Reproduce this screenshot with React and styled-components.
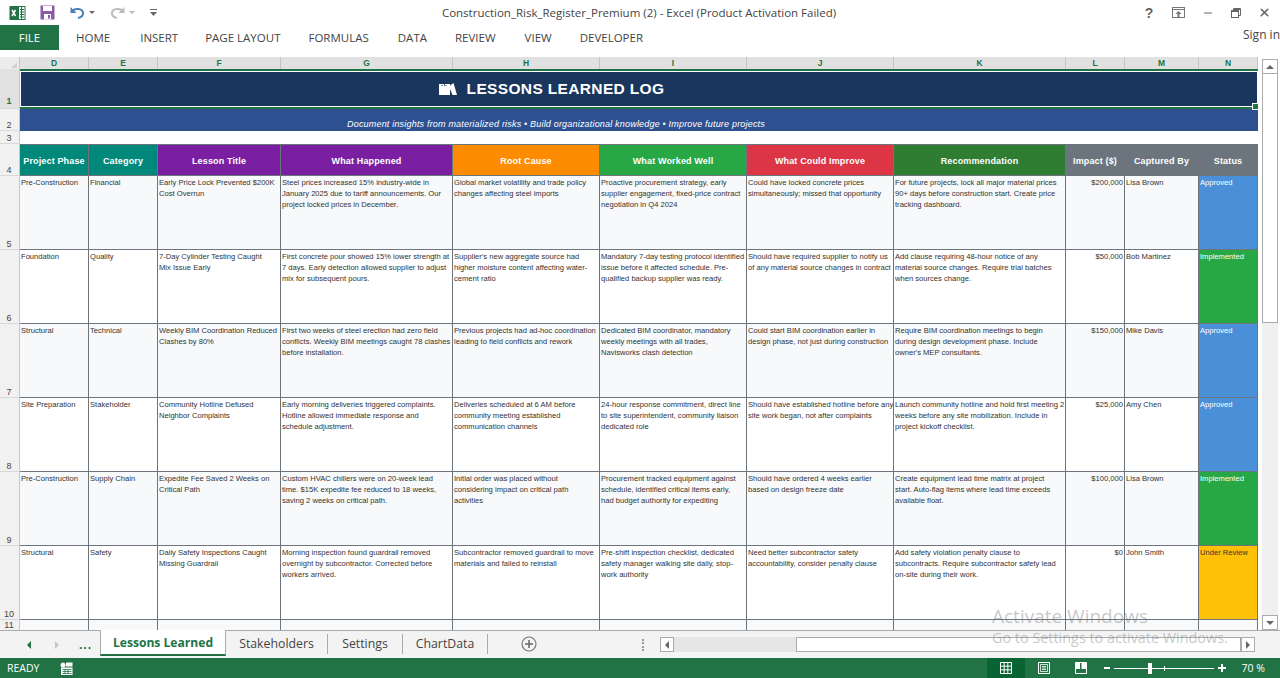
import React from 'react';
import styled, { createGlobalStyle } from 'styled-components';
import { X, Minus } from 'lucide-react';

const COLUMNS = [
  { id: 'D', width: 69 },
  { id: 'E', width: 69 },
  { id: 'F', width: 123 },
  { id: 'G', width: 172 },
  { id: 'H', width: 147 },
  { id: 'I', width: 147 },
  { id: 'J', width: 147 },
  { id: 'K', width: 172 },
  { id: 'L', width: 59 },
  { id: 'M', width: 74 },
  { id: 'N', width: 59 },
];

const GRID = COLUMNS.map(c => `${c.width}px`).join(' ');

const HEADERS = [
  ['Project Phase', '#00897b'],
  ['Category', '#00897b'],
  ['Lesson Title', '#7b1fa2'],
  ['What Happened', '#7b1fa2'],
  ['Root Cause', '#ff8c00'],
  ['What Worked Well', '#28a745'],
  ['What Could Improve', '#dc3545'],
  ['Recommendation', '#2e7d32'],
  ['Impact ($)', '#6c757d'],
  ['Captured By', '#6c757d'],
  ['Status', '#6c757d'],
];

const STATUS = {
  Approved: { bg: '#4a90d9', fg: '#ffffff' },
  Implemented: { bg: '#28a745', fg: '#ffffff' },
  'Under Review': { bg: '#ffc107', fg: '#333333' },
};

// line breaks follow the wrapping excel did on the sheet
const LESSONS = [
  {
    row: 5,
    cells: [
      'Pre-Construction',
      'Financial',
      'Early Price Lock Prevented $200K\nCost Overrun',
      'Steel prices increased 15% industry-wide in\nJanuary 2025 due to tariff announcements. Our\nproject locked prices in December.',
      'Global market volatility and trade policy\nchanges affecting steel imports',
      'Proactive procurement strategy, early\nsupplier engagement, fixed-price contract\nnegotiation in Q4 2024',
      'Could have locked concrete prices\nsimultaneously; missed that opportunity',
      'For future projects, lock all major material prices\n90+ days before construction start. Create price\ntracking dashboard.',
    ],
    impact: '$200,000',
    by: 'Lisa Brown',
    status: 'Approved',
  },
  {
    row: 6,
    cells: [
      'Foundation',
      'Quality',
      '7-Day Cylinder Testing Caught\nMix Issue Early',
      'First concrete pour showed 15% lower strength at\n7 days. Early detection allowed supplier to adjust\nmix for subsequent pours.',
      "Supplier's new aggregate source had\nhigher moisture content affecting water-\ncement ratio",
      'Mandatory 7-day testing protocol identified\nissue before it affected schedule. Pre-\nqualified backup supplier was ready.',
      'Should have required supplier to notify us\nof any material source changes in contract',
      'Add clause requiring 48-hour notice of any\nmaterial source changes. Require trial batches\nwhen sources change.',
    ],
    impact: '$50,000',
    by: 'Bob Martinez',
    status: 'Implemented',
  },
  {
    row: 7,
    cells: [
      'Structural',
      'Technical',
      'Weekly BIM Coordination Reduced\nClashes by 80%',
      'First two weeks of steel erection had zero field\nconflicts. Weekly BIM meetings caught 78 clashes\nbefore installation.',
      'Previous projects had ad-hoc coordination\nleading to field conflicts and rework',
      'Dedicated BIM coordinator, mandatory\nweekly meetings with all trades,\nNavisworks clash detection',
      'Could start BIM coordination earlier in\ndesign phase, not just during construction',
      "Require BIM coordination meetings to begin\nduring design development phase. Include\nowner's MEP consultants.",
    ],
    impact: '$150,000',
    by: 'Mike Davis',
    status: 'Approved',
  },
  {
    row: 8,
    cells: [
      'Site Preparation',
      'Stakeholder',
      'Community Hotline Defused\nNeighbor Complaints',
      'Early morning deliveries triggered complaints.\nHotline allowed immediate response and\nschedule adjustment.',
      'Deliveries scheduled at 6 AM before\ncommunity meeting established\ncommunication channels',
      '24-hour response commitment, direct line\nto site superintendent, community liaison\ndedicated role',
      'Should have established hotline before any\nsite work began, not after complaints',
      'Launch community hotline and hold first meeting 2\nweeks before any site mobilization. Include in\nproject kickoff checklist.',
    ],
    impact: '$25,000',
    by: 'Amy Chen',
    status: 'Approved',
  },
  {
    row: 9,
    cells: [
      'Pre-Construction',
      'Supply Chain',
      'Expedite Fee Saved 2 Weeks on\nCritical Path',
      'Custom HVAC chillers were on 20-week lead\ntime. $15K expedite fee reduced to 18 weeks,\nsaving 2 weeks on critical path.',
      'Initial order was placed without\nconsidering impact on critical path\nactivities',
      'Procurement tracked equipment against\nschedule, identified critical items early,\nhad budget authority for expediting',
      'Should have ordered 4 weeks earlier\nbased on design freeze date',
      'Create equipment lead time matrix at project\nstart. Auto-flag items where lead time exceeds\navailable float.',
    ],
    impact: '$100,000',
    by: 'Lisa Brown',
    status: 'Implemented',
  },
  {
    row: 10,
    cells: [
      'Structural',
      'Safety',
      'Daily Safety Inspections Caught\nMissing Guardrail',
      'Morning inspection found guardrail removed\novernight by subcontractor. Corrected before\nworkers arrived.',
      'Subcontractor removed guardrail to move\nmaterials and failed to reinstall',
      'Pre-shift inspection checklist, dedicated\nsafety manager walking site daily, stop-\nwork authority',
      'Need better subcontractor safety\naccountability, consider penalty clause',
      'Add safety violation penalty clause to\nsubcontracts. Require subcontractor safety lead\non-site during their work.',
    ],
    impact: '$0',
    by: 'John Smith',
    status: 'Under Review',
  },
];

const GlobalStyle = createGlobalStyle`
  html, body {
    margin: 0;
    height: 678px;
    overflow: hidden;
    background: #ffffff;
    font-family: "Open Sans", "Liberation Sans", sans-serif;
  }
  * { box-sizing: border-box; }
`;

const Window = styled.div`
  width: 1280px;
  height: 678px;
  display: flex;
  flex-direction: column;
  position: relative;
  overflow: hidden;
`;

const TitleBar = styled.div`
  height: 25px;
  display: flex;
  align-items: center;
  position: relative;
`;

const Quick = styled.div`
  display: flex;
  align-items: center;
  padding-left: 9px;
`;

const QuickSlot = styled.span`
  display: inline-flex;
  align-items: center;
  margin-left: ${p => p.$gap || 0}px;
`;

const Caret = styled.span`
  width: 0;
  height: 0;
  margin-left: 4px;
  border-left: 3px solid transparent;
  border-right: 3px solid transparent;
  border-top: 3px solid ${p => p.$color || '#666'};
`;

const WindowTitle = styled.div`
  position: absolute;
  left: 0;
  right: 0;
  top: 5px;
  text-align: center;
  font-size: 11.5px;
  line-height: 16px;
  color: #444;
  padding-right: 2px;
`;

const Controls = styled.div`
  margin-left: auto;
  display: flex;
  align-items: center;
  gap: 17px;
  padding-right: 9px;
  color: #666;
`;

const Help = styled.span`
  font: bold 14px "Liberation Sans", sans-serif;
  color: #666;
  width: 12px;
  text-align: center;
`;

const RibbonTabs = styled.div`
  height: 25px;
  display: flex;
  align-items: center;
`;

const FileTab = styled.div`
  width: 59px;
  height: 25px;
  background: #217346;
  color: #fff;
  font-size: 11.5px;
  display: flex;
  align-items: center;
  justify-content: center;
`;

const RibbonTab = styled.div`
  margin-left: ${p => p.$left}px;
  font-size: 11.5px;
  color: #444;
  white-space: nowrap;
`;

const SignIn = styled.div`
  margin-left: auto;
  margin-top: -6px;
  font-size: 12px;
  color: #444;
`;

const RibbonGap = styled.div`
  height: 7px;
`;

const SheetArea = styled.div`
  flex: 1;
  display: flex;
  min-height: 0;
  background: #fff;
`;

const Sheet = styled.div`
  width: 1262px;
  display: flex;
  flex-direction: column;
  position: relative;
  overflow: hidden;
`;

const ColHeads = styled.div`
  display: grid;
  grid-template-columns: 20px ${GRID};
  height: 12px;
  flex: none;
`;

const Corner = styled.div`
  background: #ececec;
  border-right: 1px solid #c6c6c6;
  position: relative;
  &::after {
    content: '';
    position: absolute;
    right: 2px;
    bottom: 1px;
    border-left: 6px solid transparent;
    border-bottom: 6px solid #d0d0d0;
  }
`;

const ColHead = styled.div`
  font: bold 8.5px/13px "Liberation Sans", sans-serif;
  text-align: center;
  color: #217346;
  background: #e1e1e1;
  border-right: 1px solid #c6c6c6;
  height: 12px;
`;

const Row = styled.div`
  display: grid;
  grid-template-columns: 20px 1fr;
  height: ${p => p.$height}px;
  flex: none;
`;

const RowHead = styled.div`
  background: ${p => (p.$active ? '#e1e1e1' : '#f1f1f1')};
  border-right: 1px solid #c6c6c6;
  border-bottom: 1px solid #d8d8d8;
  font: 9px/10px "Liberation Sans", sans-serif;
  color: ${p => (p.$active ? '#217346' : '#444')};
  font-weight: ${p => (p.$active ? 'bold' : 'normal')};
  display: flex;
  align-items: flex-end;
  justify-content: center;
  padding: 0 1px ${p => (p.$active ? 2 : 0)}px 0;
`;

const TitleCell = styled.div`
  background: #1a365d;
  border-top: 2px solid #217346;
  border-bottom: 2px solid #217346;
  box-shadow: inset 0 0 0 1px #fff;
  color: #fff;
  display: flex;
  align-items: center;
  justify-content: center;
  gap: 10px;
  padding-right: 175px;
  font: bold 15.5px "Liberation Sans", sans-serif;
  letter-spacing: 0.35px;
  position: relative;
  width: 1238px;
  &::after {
    content: '';
    position: absolute;
    right: -1px;
    bottom: -3px;
    width: 5px;
    height: 5px;
    background: #217346;
    border: 1px solid #fff;
  }
`;

const SubtitleCell = styled.div`
  background: #2e5090;
  color: #fff;
  font: italic 9px/14px "Liberation Sans", sans-serif;
  letter-spacing: 0.19px;
  text-align: center;
  padding: 8px 166px 0 0;
  white-space: nowrap;
  width: 1238px;
`;

const Cells = styled.div`
  display: grid;
  grid-template-columns: ${GRID};
  width: 1238px;
`;

const HeaderCell = styled.div`
  background: ${p => p.$bg};
  color: #fff;
  font: bold 9px "Liberation Sans", sans-serif;
  letter-spacing: 0.15px;
  display: flex;
  align-items: center;
  justify-content: center;
  white-space: nowrap;
  padding-top: 1px;
  border-top: 1px solid #6c757d;
  border-bottom: 1px solid #6c757d;
  border-right: 1px solid #6c757d;
`;

const Cell = styled.div`
  background: ${p => p.$bg || (p.$odd ? '#f8f9fa' : '#ffffff')};
  color: ${p => p.$fg || '#333333'};
  font: 7.6px/11px "Liberation Sans", sans-serif;
  padding: 1px 1px 0 1px;
  border-right: 1px solid #6c757d;
  border-bottom: 1px solid #6c757d;
  text-align: ${p => (p.$right ? 'right' : 'left')};
  white-space: pre;
  overflow: hidden;
`;

const Watermark = styled.div`
  position: absolute;
  left: 992px;
  top: 604px;
  color: rgba(120, 120, 120, 0.42);
  pointer-events: none;
  white-space: nowrap;
`;

const WatermarkTitle = styled.div`
  font-size: 19px;
  line-height: 24px;
`;

const WatermarkText = styled.div`
  font-size: 14.4px;
  line-height: 18px;
  margin-top: 1px;
`;

const VScroll = styled.div`
  width: 18px;
  padding: 2px 2px 0 0;
  background: #fff;
  display: flex;
  flex-direction: column;
`;

const ScrollBtn = styled.div`
  width: 16px;
  height: 15px;
  flex: none;
  border: 1px solid #ababab;
  background: #fff;
  display: flex;
  align-items: center;
  justify-content: center;
`;

const Arrow = styled.span`
  width: 0;
  height: 0;
  border-left: 4px solid transparent;
  border-right: 4px solid transparent;
  ${p => (p.$down ? 'border-top: 4px solid #666;' : 'border-bottom: 4px solid #666;')}
`;

const VThumb = styled.div`
  height: 249px;
  flex: none;
  background: #fff;
  border: 1px solid #ababab;
  border-top: none;
`;

const VTrack = styled.div`
  flex: 1;
  background: #f0f0f0;
`;

const TabBar = styled.div`
  height: 28px;
  flex: none;
  background: #f3f3f3;
  display: flex;
  align-items: flex-start;
  border-top: 1px solid #ababab;
`;

const TabNav = styled.div`
  width: 100px;
  height: 27px;
  display: flex;
  align-items: center;
  padding-left: 27px;
`;

const NavArrow = styled.span`
  width: 0;
  height: 0;
  border-top: 4px solid transparent;
  border-bottom: 4px solid transparent;
  border-${p => (p.$right ? 'left' : 'right')}: 4px solid ${p => (p.$off ? '#c6c6c6' : p.$gray ? '#666' : '#217346')};
  margin-right: ${p => p.$gap || 0}px;
`;

const More = styled.span`
  font: bold 12px "Liberation Sans", sans-serif;
  color: #217346;
  letter-spacing: 1px;
`;

const ActiveTab = styled.div`
  width: 126px;
  height: 26px;
  margin-top: -1px;
  background: #fff;
  border-left: 1px solid #ababab;
  border-right: 1px solid #ababab;
  border-bottom: 2px solid #217346;
  color: #217346;
  font-weight: 700;
  font-size: 12.1px;
  line-height: 26px;
  text-align: center;
  white-space: nowrap;
`;

const SheetTab = styled.div`
  width: ${p => p.$width}px;
  height: 20px;
  margin-top: 3px;
  border-right: 1px solid #ababab;
  color: #444;
  font-size: 12.3px;
  line-height: 20px;
  text-align: center;
  white-space: nowrap;
`;

const AddSheet = styled.div`
  margin: 5px 0 0 33px;
  display: flex;
`;

const TabSplit = styled.div`
  margin: 8px 0 0 auto;
  width: 2px;
  height: 12px;
  border-left: 2px dotted #999;
`;

const HScroll = styled.div`
  width: 595px;
  height: 15px;
  margin: 6px 25px 0 16px;
  display: flex;
  background: #e6e6e6;
`;

const HBtn = styled.div`
  width: 14px;
  height: 15px;
  border: 1px solid #ababab;
  background: #fff;
  display: flex;
  align-items: center;
  justify-content: center;
  flex: none;
`;

const HTrack = styled.div`
  width: 122px;
`;

const HThumb = styled.div`
  flex: 1;
  background: #fff;
  border: 1px solid #ababab;
`;

const StatusBar = styled.div`
  height: 20px;
  flex: none;
  background: #217346;
  color: #fff;
  display: flex;
  align-items: center;
  font-size: 10.5px;
`;

const Ready = styled.span`
  margin-left: 7px;
  width: 53px;
`;

const Views = styled.div`
  margin-left: auto;
  display: flex;
`;

const ViewBtn = styled.div`
  width: ${p => p.$width || 38}px;
  height: 20px;
  display: flex;
  align-items: center;
  justify-content: center;
  background: ${p => (p.$active ? '#0a6332' : 'transparent')};
`;

const Zoom = styled.div`
  display: flex;
  align-items: center;
  margin-left: 5px;
`;

const ZoomSign = styled.span`
  width: ${p => p.$width}px;
  height: 2px;
  background: #fff;
  position: relative;
  ${p => p.$plus && `
    &::after {
      content: '';
      position: absolute;
      left: 3px;
      top: -3px;
      width: 2px;
      height: 8px;
      background: #fff;
    }
  `}
`;

const ZoomTrack = styled.div`
  width: 100px;
  height: 1px;
  background: #fff;
  margin: 0 4px;
  position: relative;
`;

const ZoomThumb = styled.span`
  position: absolute;
  left: 34px;
  top: -5px;
  width: 4px;
  height: 11px;
  background: #fff;
`;

const ZoomTick = styled.span`
  position: absolute;
  left: 50px;
  top: -2px;
  width: 1px;
  height: 5px;
  background: #fff;
`;

const ZoomLabel = styled.span`
  margin-left: 16px;
  margin-right: 15px;
  font-size: 10.5px;
`;

function ExcelLogo() {
  return (
    <svg width="17" height="16" viewBox="0 0 17 16">
      <rect x="6" y="1.5" width="10" height="13" fill="#fff" stroke="#217346" />
      <path d="M11 4.5h4M11 7h4M11 9.5h4M11 12h4M12.500 2v12" stroke="#217346" strokeWidth="1" />
      <rect x="0.500" y="1" width="9.500" height="14" fill="#217346" />
      <path d="M3 5l3.500 6M6.500 5L3 11" stroke="#fff" strokeWidth="1.500" />
    </svg>
  );
}

function SaveIcon() {
  return (
    <svg width="15" height="15" viewBox="0 0 15 15">
      <rect x="0.5" y="0.5" width="14" height="14" fill="#8a5aa8" />
      <rect x="3" y="1" width="9" height="5" fill="#fff" />
      <rect x="4" y="9" width="7" height="5.5" fill="#fff" />
      <rect x="8" y="10" width="2" height="3.5" fill="#8a5aa8" />
    </svg>
  );
}

function UndoIcon({ color, flip }) {
  return (
    <svg width="15" height="13" viewBox="0 0 15 13" style={flip ? { transform: 'scaleX(-1)' } : undefined}>
      <path d="M2 5c3-3 10-3 11 1.500c.5 3-2 5-5 5.500" fill="none" stroke={color} strokeWidth="2" />
      <path d="M0.500 1v6h6z" fill={color} />
    </svg>
  );
}

function CustomizeIcon() {
  return (
    <svg width="7" height="9" viewBox="0 0 7 9">
      <path d="M0 1h7v1H0zM0 4h7L3.500 8z" fill="#666" />
    </svg>
  );
}

function RestoreRibbonIcon() {
  return (
    <svg width="13" height="11" viewBox="0 0 13 11">
      <rect x="0.5" y="0.5" width="12" height="10" fill="none" stroke="#777" />
      <path d="M1 2.500h11" stroke="#777" />
      <path d="M6.500 4l-3 3h2v3h2V7h2z" fill="#777" />
    </svg>
  );
}

function RestoreIcon() {
  return (
    <svg width="10" height="10" viewBox="0 0 10 10">
      <rect x="0.500" y="2.500" width="7" height="7" fill="#fff" stroke="#666" />
      <path d="M0.500 3.500h7" stroke="#666" />
      <path d="M2.500 2.500v-2h7v7h-2" fill="none" stroke="#666" />
      <path d="M2.500 1.500h7" stroke="#666" />
    </svg>
  );
}

function BooksIcon() {
  return (
    <svg width="18" height="12" viewBox="0 0 18 12">
      <path d="M0 1h11v11H0z" fill="#fff" />
      <path d="M11 2.500l3.500-2.500 3.500 12h-4.500l-2.500-6z" fill="#fff" />
      <path d="M2 2.500h2M6 2.500h2" stroke="#8aa0bd" strokeWidth="1" />
      <path d="M5.500 1v2" stroke="#1a365d" strokeWidth="0.800" />
    </svg>
  );
}

function MacroIcon() {
  return (
    <svg width="13" height="13" viewBox="0 0 13 13">
      <circle cx="3" cy="3" r="2.500" fill="#fff" />
      <rect x="6" y="0.500" width="6.500" height="4" fill="#fff" />
      <rect x="1" y="5.500" width="11.500" height="7.500" fill="#fff" />
      <path d="M2.500 7.500h9M2.500 9.500h9M2.500 11.500h9M5 7v5M8 7v5" stroke="#217346" strokeWidth="0.8" />
    </svg>
  );
}

function NormalViewIcon() {
  return (
    <svg width="12" height="12" viewBox="0 0 12 12">
      <path d="M.5.5h11v11H.5zM4.170.5v11M7.830.5v11M.5 4.170h11M.5 7.830h11" fill="none" stroke="#fff" />
    </svg>
  );
}

function PageViewIcon() {
  return (
    <svg width="12" height="12" viewBox="0 0 12 12">
      <path d="M.5.5h11v11H.5z" fill="none" stroke="#fff" />
      <path d="M2.500 2.500h7v7h-7zM4 4.500h4M4 6h4M4 7.500h4" fill="none" stroke="#fff" strokeWidth="0.800" />
    </svg>
  );
}

function BreakViewIcon() {
  return (
    <svg width="12" height="12" viewBox="0 0 12 12">
      <path d="M.5.5h11v11H.5z" fill="none" stroke="#fff" />
      <path d="M1 1h4v6H1zM6.500 1H11v6H6.500z" fill="#fff" />
    </svg>
  );
}

function AddSheetIcon() {
  return (
    <svg width="16" height="16" viewBox="0 0 16 16">
      <circle cx="8" cy="8" r="7" fill="none" stroke="#777" strokeWidth="1.200" />
      <path d="M8 4v8M4 8h8" stroke="#666" strokeWidth="1.500" />
    </svg>
  );
}

function App() {
  return (
    <Window>
      <GlobalStyle />
      <TitleBar>
        <Quick>
          <ExcelLogo />
          <QuickSlot $gap={14}><SaveIcon /></QuickSlot>
          <QuickSlot $gap={15}><UndoIcon color="#4a7eb5" /><Caret /></QuickSlot>
          <QuickSlot $gap={15}><UndoIcon color="#bbbbbb" flip /><Caret $color="#bbb" /></QuickSlot>
          <QuickSlot $gap={15}><CustomizeIcon /></QuickSlot>
        </Quick>
        <WindowTitle>Construction_Risk_Register_Premium (2) - Excel (Product Activation Failed)</WindowTitle>
        <Controls>
          <Help>?</Help>
          <RestoreRibbonIcon />
          <Minus size={12} strokeWidth={2} />
          <RestoreIcon />
          <X size={13} strokeWidth={3} />
        </Controls>
      </TitleBar>
      <RibbonTabs>
        <FileTab>FILE</FileTab>
        <RibbonTab $left={17}>HOME</RibbonTab>
        <RibbonTab $left={30}>INSERT</RibbonTab>
        <RibbonTab $left={27}>PAGE LAYOUT</RibbonTab>
        <RibbonTab $left={28}>FORMULAS</RibbonTab>
        <RibbonTab $left={29}>DATA</RibbonTab>
        <RibbonTab $left={28}>REVIEW</RibbonTab>
        <RibbonTab $left={29}>VIEW</RibbonTab>
        <RibbonTab $left={28}>DEVELOPER</RibbonTab>
        <SignIn>Sign in</SignIn>
      </RibbonTabs>
      <RibbonGap />
      <SheetArea>
        <Sheet>
          <ColHeads>
            <Corner />
            {COLUMNS.map(c => <ColHead key={c.id}>{c.id}</ColHead>)}
          </ColHeads>
          <Row $height={40}>
            <RowHead $active>1</RowHead>
            <TitleCell><BooksIcon />LESSONS LEARNED LOG</TitleCell>
          </Row>
          <Row $height={22}>
            <RowHead>2</RowHead>
            <SubtitleCell>Document insights from materialized risks • Build organizational knowledge • Improve future projects</SubtitleCell>
          </Row>
          <Row $height={13}>
            <RowHead>3</RowHead>
            <div />
          </Row>
          <Row $height={32}>
            <RowHead>4</RowHead>
            <Cells>
              {HEADERS.map(([label, bg]) => <HeaderCell key={label} $bg={bg}>{label}</HeaderCell>)}
            </Cells>
          </Row>
          {LESSONS.map((lesson, i) => (
            <Row key={lesson.row} $height={74}>
              <RowHead>{lesson.row}</RowHead>
              <Cells>
                {lesson.cells.map(text => <Cell key={text} $odd={i % 2 === 0}>{text}</Cell>)}
                <Cell $odd={i % 2 === 0} $right>{lesson.impact}</Cell>
                <Cell $odd={i % 2 === 0}>{lesson.by}</Cell>
                <Cell $bg={STATUS[lesson.status].bg} $fg={STATUS[lesson.status].fg}>{lesson.status}</Cell>
              </Cells>
            </Row>
          ))}
          <Row $height={10}>
            <RowHead>11</RowHead>
            <Cells>
              {COLUMNS.map(c => <Cell key={c.id} $odd />)}
            </Cells>
          </Row>
        </Sheet>
        <VScroll>
          <ScrollBtn><Arrow /></ScrollBtn>
          <VThumb />
          <VTrack />
          <ScrollBtn><Arrow $down /></ScrollBtn>
        </VScroll>
      </SheetArea>
      <TabBar>
        <TabNav>
          <NavArrow $gap={24} />
          <NavArrow $right $off $gap={20} />
          <More>...</More>
        </TabNav>
        <ActiveTab>Lessons Learned</ActiveTab>
        <SheetTab $width={102}>Stakeholders</SheetTab>
        <SheetTab $width={75}>Settings</SheetTab>
        <SheetTab $width={85}>ChartData</SheetTab>
        <AddSheet><AddSheetIcon /></AddSheet>
        <TabSplit />
        <HScroll>
          <HBtn><NavArrow $gray /></HBtn>
          <HTrack />
          <HThumb />
          <HBtn><NavArrow $right $gray /></HBtn>
        </HScroll>
      </TabBar>
      <StatusBar>
        <Ready>READY</Ready>
        <MacroIcon />
        <Views>
          <ViewBtn $active><NormalViewIcon /></ViewBtn>
          <ViewBtn><PageViewIcon /></ViewBtn>
          <ViewBtn $width={36}><BreakViewIcon /></ViewBtn>
        </Views>
        <Zoom>
          <ZoomSign $width={6} />
          <ZoomTrack><ZoomThumb /><ZoomTick /></ZoomTrack>
          <ZoomSign $width={8} $plus />
        </Zoom>
        <ZoomLabel>70 %</ZoomLabel>
      </StatusBar>
      <Watermark>
        <WatermarkTitle>Activate Windows</WatermarkTitle>
        <WatermarkText>Go to Settings to activate Windows.</WatermarkText>
      </Watermark>
    </Window>
  );
}

export default App;
